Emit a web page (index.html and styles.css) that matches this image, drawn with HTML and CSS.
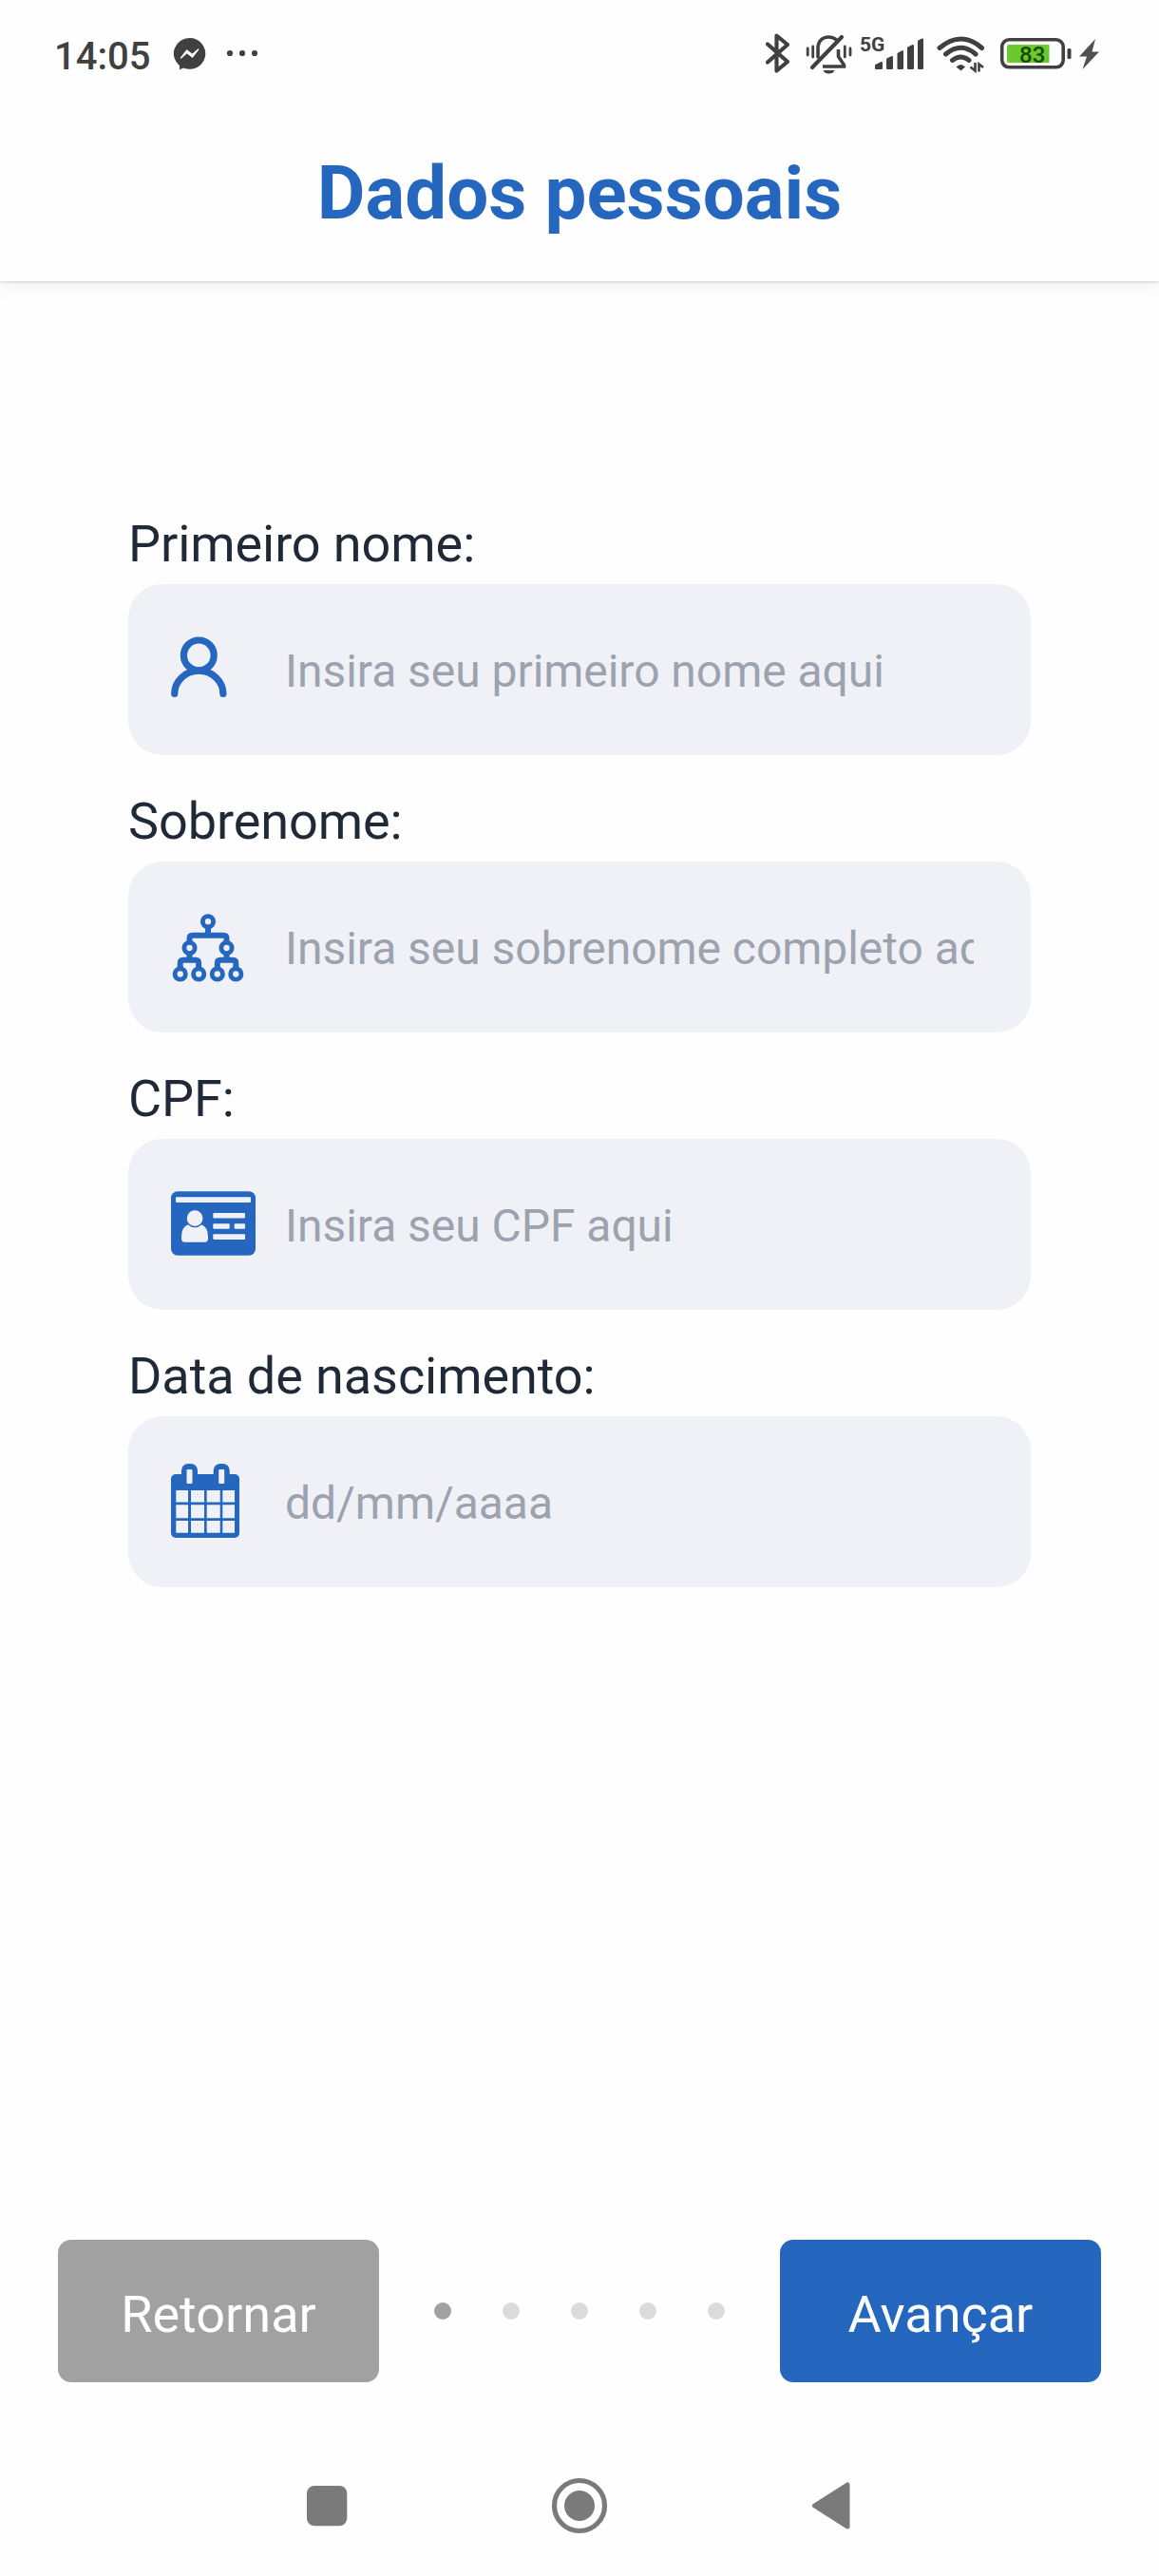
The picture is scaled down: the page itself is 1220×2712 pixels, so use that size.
FILE: index.html
```html
<!DOCTYPE html>
<html lang="pt-BR">
<head>
<meta charset="utf-8">
<title>Dados pessoais</title>
<link rel="stylesheet" href="styles.css">
</head>
<body>
<div class="status-bar">
  <div class="status-group">
    <span class="clock">14:05</span>
    <svg class="status-icon" width="50" height="60" viewBox="180 20 50 60">
      <path fill="#404040" d="M199.5 40a16.5 16.4 0 1 1-6.200 31.500L189 73.300V69.200A16.500 16.400 0 0 1 199.500 40Z"/>
      <path d="M190.500 61l6.200-8 5.800 4.500 6.200-5.500-6.200 8-5.800-4.500Z" fill="#fff" stroke="#fff" stroke-width="1.300" stroke-linejoin="round"/>
    </svg>
    <svg class="status-icon" width="50" height="60" viewBox="230 20 50 60" fill="#404040">
      <circle cx="242" cy="56" r="3.100"/><circle cx="255" cy="56" r="3.100"/><circle cx="268" cy="56" r="3.100"/>
    </svg>
  </div>
  <div class="status-group">
    <svg class="status-icon" width="40" height="60" viewBox="800 20 40 60">
      <path d="M808 46.500l21 18.500-11.500 9.500V37.500L829 47 808 65.500" fill="none" stroke="#404040" stroke-width="4.200" stroke-linecap="round" stroke-linejoin="round"/>
    </svg>
    <svg class="status-icon" width="60" height="60" viewBox="840 20 60 60" fill="none" stroke="#404040" stroke-width="3.600" stroke-linecap="round">
      <path d="M861 60V51C861 43 866 39 872 39C876 39 879 40.500 881 42.500" />
      <path d="M855 71L886 39" stroke-width="4.200"/>
      <path d="M882.500 52V59.500L888.500 68.500V70H866" stroke-linecap="butt"/>
      <path d="M866.500 74H878.500Q877 77.500 872.500 77.500T866.500 74Z" fill="#404040" stroke="none"/>
      <path d="M850.200 51V58M855.700 49V60M889.300 49V60M895 51V58" stroke-width="2.800"/>
    </svg>
    <svg class="status-icon" width="80" height="60" viewBox="900 20 80 60" fill="#404040" stroke="#404040" stroke-linejoin="round">
      <text class="network" x="905" y="53.700" stroke="none">5G</text>
      <path d="M922 69L928 66V72H922ZM934 62.500L939 60V72H934ZM945.500 56.500L950 54V72H945.500ZM956 50.500L961 48V72H956ZM967 43.500L971 41.500V72H967Z" stroke-width="2"/>
    </svg>
    <svg class="status-icon" width="60" height="60" viewBox="980 20 60 60" fill="none" stroke="#404040" stroke-width="5">
      <path d="M989 50.500Q1011.500 31.500 1033.500 50.500" stroke-linecap="round"/>
      <path d="M995.500 57Q1011.500 43.500 1027 57M1002.500 63.500Q1011.500 56.500 1020 63.500" stroke-linecap="round"/>
      <path d="M1006.500 70.500Q1011.500 65.500 1016 70.500L1011.500 74.500Z" fill="#404040" stroke="none"/>
      <path d="M1026.500 66V74.500L1021.500 70.500M1030.500 75.500V67.500L1035 71" stroke-width="2.600"/>
    </svg>
    <svg class="status-icon" width="90" height="60" viewBox="1040 20 90 60">
      <rect x="1054.700" y="41.800" width="64.500" height="29" rx="7.500" fill="#fefefe" stroke="#404040" stroke-width="3.600"/>
      <path d="M1062.500 47H1104.500V66H1062.500Q1060 66 1060 63.500V49.500Q1060 47 1062.500 47Z" fill="#69c92e"/>
      <rect x="1123.500" y="51" width="4" height="11" rx="1.500" fill="#404040"/>
      <text class="charge" x="1073" y="66.300">83</text>
    </svg>
    <svg class="status-icon" width="30" height="60" viewBox="1130 20 30 60">
      <path d="M1153 41L1136 59.500H1144L1139.500 73L1157 54.500H1149.500Z" fill="#505050"/>
    </svg>
  </div>
</div>

<header class="header"><h1 class="title">Dados pessoais</h1></header>

<main class="form">
  <div class="group">
    <label class="label" for="nome">Primeiro nome:</label>
    <div class="field">
      <svg class="field-icon" viewBox="0 0 120 90" fill="none" stroke="#2567be" stroke-width="7.200" stroke-linecap="round">
        <circle cx="29.300" cy="29.900" r="15.900"/>
        <path d="M3.700 70.500A25.600 24.300 0 0 1 54.900 70.500"/>
      </svg>
      <input class="input" id="nome" type="text" placeholder="Insira seu primeiro nome aqui">
    </div>
  </div>
  <div class="group">
    <label class="label" for="sobrenome">Sobrenome:</label>
    <div class="field">
      <svg class="field-icon" viewBox="0 0 120 90" fill="none" stroke="#2567be">
        <path stroke-width="6" d="M39 25V33M19.500 40V36q0-3.200 3.200-3.200H55.300q3.200 0 3.200 3.200V40M19.500 52V58M58.500 52V58M9.700 67V61.900q0-3.200 3.200-3.200H25.900q3.200 0 3.200 3.200V67M48.800 67V61.900q0-3.200 3.200-3.200H65.100q3.200 0 3.200 3.200V67"/>
        <g stroke-width="4.900">
          <circle cx="39" cy="18.200" r="5.600"/>
          <circle cx="19.500" cy="46" r="5.600"/><circle cx="58.500" cy="46" r="5.600"/>
          <circle cx="9.700" cy="73.500" r="5.600"/><circle cx="29.200" cy="73.500" r="5.600"/><circle cx="48.800" cy="73.500" r="5.600"/><circle cx="68.300" cy="73.500" r="5.600"/>
        </g>
      </svg>
      <input class="input" id="sobrenome" type="text" placeholder="Insira seu sobrenome completo aqui">
    </div>
  </div>
  <div class="group">
    <label class="label" for="cpf">CPF:</label>
    <div class="field">
      <svg class="field-icon" viewBox="0 0 120 90" fill="#f0f1f7">
        <rect y="10.300" width="89" height="67.400" rx="7" fill="#2567be"/>
        <rect x="5" y="16.300" width="79" height="5.700" rx="1"/>
        <path d="M18 45.300H32Q39 48 39 58V60Q39 63.700 35.500 63.700H14.500Q11 63.700 11 60V58Q11 48 18 45.300Z"/>
        <circle cx="25.100" cy="38.600" r="9" stroke="#2567be" stroke-width="1.200"/>
        <rect x="44.300" y="33" width="33.700" height="5.600" rx="1"/>
        <rect x="44.300" y="44.200" width="17.400" height="5.600" rx="1"/>
        <rect x="66.700" y="44.200" width="11.300" height="5.600" rx="1"/>
        <rect x="44.300" y="55.300" width="33.700" height="5.600" rx="1"/>
      </svg>
      <input class="input" id="cpf" type="text" placeholder="Insira seu CPF aqui">
    </div>
  </div>
  <div class="group">
    <label class="label" for="nascimento">Data de nascimento:</label>
    <div class="field">
      <svg class="field-icon" viewBox="0 0 120 90" fill="#2567be">
        <rect y="16" width="72" height="67" rx="5"/>
        <rect x="11" y="5" width="17" height="26" rx="7"/><rect x="44.700" y="5" width="17" height="26" rx="7"/>
        <g fill="#f0f1f7">
          <rect x="16.500" y="11" width="6" height="15" rx="1"/><rect x="50.200" y="11" width="6" height="15" rx="1"/>
          <path d="M5.300 33H18V45.500H5.300ZM21 33H35V45.500H21ZM37.700 33H51.700V45.500H37.700ZM54.300 33H67V45.500H54.300ZM5.300 48.200H18V62.200H5.300ZM21 48.200H35V62.200H21ZM37.700 48.200H51.700V62.200H37.700ZM54.300 48.200H67V62.200H54.300ZM5.300 65H18V77.700H5.300ZM21 65H35V77.700H21ZM37.700 65H51.700V77.700H37.700ZM54.300 65H67V77.700H54.300Z"/>
        </g>
      </svg>
      <input class="input" id="nascimento" type="text" placeholder="dd/mm/aaaa">
    </div>
  </div>
</main>

<footer class="actions">
  <button class="button button-back" type="button">Retornar</button>
  <div class="steps">
    <span class="step step-active"></span><span class="step"></span><span class="step"></span><span class="step"></span><span class="step"></span>
  </div>
  <button class="button button-next" type="button">Avançar</button>
</footer>

<nav class="system-nav">
  <svg width="60" height="60" viewBox="0 0 60 60"><rect x="9" y="9" width="42.300" height="42.300" rx="8" fill="#7a7a7a"/></svg>
  <svg width="60" height="60" viewBox="0 0 60 60"><circle cx="30" cy="30" r="26.500" fill="none" stroke="#7a7a7a" stroke-width="5.200"/><circle cx="30" cy="30" r="16" fill="#7a7a7a"/></svg>
  <svg width="60" height="60" viewBox="0 0 60 60"><path d="M11.500 30L46 8V52Z" fill="#7a7a7a" stroke="#7a7a7a" stroke-width="5" stroke-linejoin="round"/></svg>
</nav>
</body>
</html>
```

FILE: styles.css
```css
* {
  box-sizing: border-box;
}

body {
  display: flex;
  flex-direction: column;
  width: 1220px;
  height: 2712px;
  margin: 0;
  overflow: hidden;
  background: #fefefe;
  color: #1f2937;
  font-family: Roboto, "Liberation Sans", sans-serif;
}

svg {
  display: block;
  flex: none;
}

.status-bar {
  display: flex;
  justify-content: space-between;
  height: 116px;
  padding: 20px 60px 0 57px;
}

.status-group {
  display: flex;
}

.clock {
  width: 123px;
  color: #404040;
  font-size: 40px;
  font-weight: 500;
  line-height: 80px;
  white-space: nowrap;
}

.network {
  font-size: 21px;
  font-weight: 700;
}

.charge {
  fill: #174a08;
  font-size: 24px;
  font-weight: 500;
}

.header {
  height: 180px;
  background: #fefefe;
  box-shadow: 0 1px 3px rgba(0, 0, 0, 0.16), 0 6px 20px rgba(0, 0, 0, 0.05);
  clip-path: inset(0 0 -40px);
}

.title {
  margin: 0;
  padding-top: 38px;
  color: #2567be;
  font-size: 78px;
  font-weight: 700;
  line-height: 100px;
  text-align: center;
}

.form {
  display: flex;
  flex: 1;
  flex-direction: column;
  gap: 28px;
  padding: 235px 135px 0;
}

.label {
  display: block;
  height: 84px;
  font-size: 54px;
  letter-spacing: -0.08px;
  line-height: 84px;
}

.field {
  display: flex;
  align-items: center;
  height: 180px;
  padding: 0 60px 0 45px;
  border-radius: 36px;
  background: #f0f1f7;
}

.field-icon {
  width: 120px;
  height: 90px;
}

.input {
  flex: 1;
  min-width: 0;
  height: 180px;
  padding: 3px 0 0;
  border: 0;
  background: transparent;
  color: #1f2937;
  font: 48px Roboto, "Liberation Sans", sans-serif;
  letter-spacing: -0.04px;
}

.input::placeholder {
  color: #9ca3af;
}

.actions {
  display: flex;
  align-items: center;
  justify-content: space-between;
  padding: 0 61px;
}

.button {
  width: 338px;
  height: 150px;
  padding: 7px 0 0;
  border: 0;
  border-radius: 14px;
  color: #fefefe;
  font: 54px Roboto, "Liberation Sans", sans-serif;
}

.button-back {
  background: #a1a1a1;
}

.button-next {
  background: #2567be;
}

.steps {
  display: flex;
  gap: 54px;
}

.step {
  width: 18px;
  height: 18px;
  border-radius: 50%;
  background: #dbdbdb;
}

.step-active {
  background: #a1a1a1;
}

.system-nav {
  display: flex;
  justify-content: space-between;
  height: 204px;
  padding: 100px 314px 0;
}
```
